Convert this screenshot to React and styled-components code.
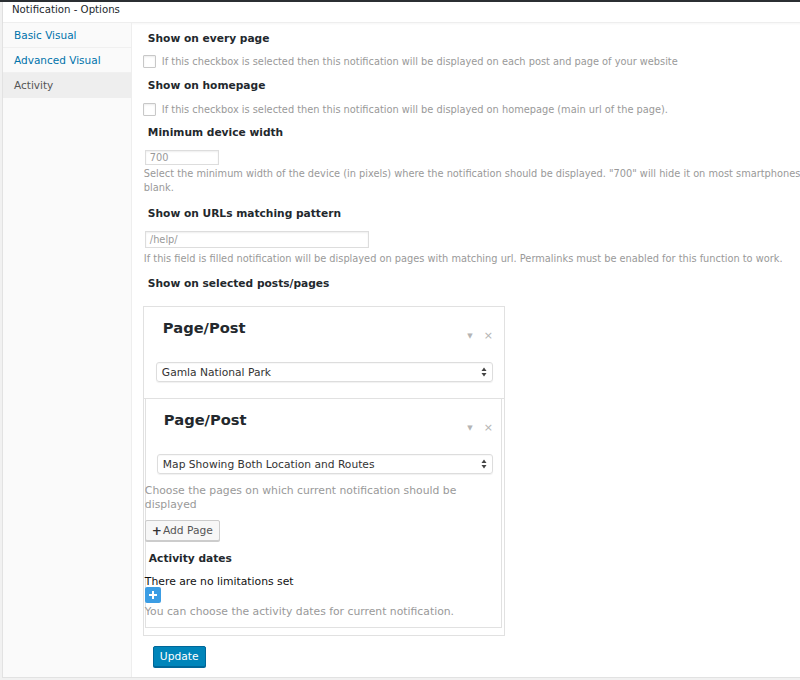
import React from "react";
import styled, { createGlobalStyle } from "styled-components";

const Global = createGlobalStyle`
  html, body { margin: 0; padding: 0; }
  body {
    background: #f1f1f1;
    font-family: "DejaVu Sans", Verdana, sans-serif;
    overflow: hidden;
    width: 800px;
    height: 680px;
  }
`;

const TopLine = styled.div`
  height: 2px;
  background: #2b2f33;
`;

const Postbox = styled.div`
  margin-left: 2px;
  width: 900px;
  height: 675px;
  background: #fff;
  border-left: 1px solid #e2e2e2;
  border-bottom: 1px solid #e2e2e2;
  display: flex;
  flex-direction: column;
`;

const BoxHeader = styled.div`
  height: 20px;
  line-height: 15px;
  padding-left: 9px;
  font-size: 10.2px;
  color: #23282d;
  border-bottom: 1px solid #eee;
  box-shadow: 0 1px 2px rgba(0, 0, 0, 0.04);
`;

const Body = styled.div`
  flex: 1;
  display: flex;
`;

const Sidebar = styled.ul`
  list-style: none;
  margin: 0;
  padding: 0;
  width: 128px;
  background: #fafafa;
  border-right: 1px solid #eee;
`;

const NavItem = styled.li`
  height: 24px;
  line-height: 25px;
  padding-left: 11px;
  font-size: 10.5px;
  color: ${(p) => (p.$active ? "#555" : "#0073aa")};
  background: ${(p) => (p.$active ? "#eee" : "transparent")};
  border-bottom: 1px solid ${(p) => (p.$active ? "#eee" : "#f0f0f0")};
`;

const Content = styled.div`
  width: 760px;
  padding: 9px 0 0 12px;
`;

const Field = styled.div`
  margin-bottom: ${(p) => p.$mb ?? 11}px;
`;

const Heading = styled.h4`
  margin: 0 0 ${(p) => p.$mb ?? 9}px 4px;
  font-size: 10.65px;
  line-height: 14px;
  font-weight: bold;
  color: #23282d;
`;

const CheckRow = styled.label`
  display: flex;
  align-items: center;
  gap: 6px;
  height: 14px;
  font-size: 9.8px;
  color: #999;
`;

const Box = styled.span`
  width: 11px;
  height: 11px;
  margin-left: -1px;
  border: 1px solid #c8c8c8;
  border-radius: 1px;
  background: #fff;
  box-shadow: inset 0 1px 2px rgba(0, 0, 0, 0.08);
  flex: none;
`;

const TextInput = styled.div`
  width: ${(p) => p.$w}px;
  height: ${(p) => p.$h}px;
  margin-left: 1px;
  border: 1px solid #ddd;
  box-shadow: inset 0 1px 2px rgba(0, 0, 0, 0.07);
  font-size: 9.8px;
  line-height: ${(p) => p.$h}px;
  padding-left: 4px;
  box-sizing: content-box;
  color: #999;
`;

const Desc = styled.p`
  margin: ${(p) => p.$mt ?? 2}px 0 0 0;
  font-size: 9.8px;
  line-height: 14px;
  color: #999;
`;

const Outer = styled.div`
  width: 360px;
  margin-left: -1px;
  border: 1px solid #e1e1e1;
  padding-bottom: 7px;
`;

const Panel = styled.div`
  padding: ${(p) => p.$pad};
  border-bottom: ${(p) => (p.$noBorder ? "none" : "1px solid #e1e1e1")};
`;

const PanelHead = styled.div`
  display: flex;
  align-items: flex-end;
  height: 41px;
  padding-left: 7px;
  margin-bottom: 14px;
`;

const PanelTitle = styled.h3`
  flex: 1;
  margin: 0;
  align-self: flex-start;
  padding-top: 12px;
  font-size: 14.7px;
  line-height: 18px;
  font-weight: bold;
  color: #23282d;
`;

const Tool = styled.span`
  font-size: ${(p) => p.$s}px;
  color: #b4b4b4;
  margin-left: ${(p) => p.$ml}px;
  line-height: 12px;
  padding-bottom: 6px;
`;

const Select = styled.div`
  height: 18px;
  border: 1px solid #ddd;
  border-radius: 3px;
  box-shadow: 0 1px 1px rgba(0, 0, 0, 0.06), inset 0 1px 1px rgba(0, 0, 0, 0.03);
  display: flex;
  align-items: center;
  padding: 0 5px;
  font-size: 10.7px;
  color: #333;
`;

const SelectText = styled.span`
  flex: 1;
`;

const Inner = styled.div`
  margin: 0 2px 0 1px;
  border: 1px solid #e1e1e1;
  border-top: none;
  padding-bottom: 8px;
`;

const Wrap = styled.div`
  margin-left: -1px;
  padding-right: 4px;
`;

const Hint = styled.p`
  margin: 0;
  font-size: 10.8px;
  line-height: 14px;
  color: ${(p) => (p.$dark ? "#111" : "#999")};
`;

const AddButton = styled.div`
  display: inline-flex;
  align-items: center;
  margin-top: 8px;
  height: 19px;
  padding: 0 6px;
  border: 1px solid #ccc;
  border-radius: 2px;
  background: #f7f7f7;
  box-shadow: 0 1px 0 #ccc;
  font-size: 10.7px;
  color: #555;
`;

const Plus = styled.b`
  font-size: 12px;
  color: #333;
  margin-right: 1px;
`;

const SubHeading = styled.h4`
  margin: 11px 0 9px 4px;
  font-size: 10.65px;
  line-height: 14px;
  font-weight: bold;
  color: #23282d;
`;

const BlueAdd = styled.div`
  width: 16px;
  height: 16px;
  margin: -2px 0 2px;
  border-radius: 2px;
  background: #3b9de4;
  display: flex;
  align-items: center;
  justify-content: center;
`;

const UpdateButton = styled.div`
  display: inline-block;
  margin-left: 9px;
  height: 19px;
  line-height: 19px;
  padding: 0 6px;
  border: 1px solid #006799;
  border-radius: 2px;
  background: #0085ba;
  box-shadow: 0 1px 0 #006799;
  color: #fff;
  font-size: 10.7px;
`;

const Arrows = () => (
  <svg width="6" height="10" viewBox="0 0 6 10">
    <path d="M3 0.5 L5.5 4 H0.5 Z" fill="#444" />
    <path d="M3 9.5 L5.5 6 H0.5 Z" fill="#444" />
  </svg>
);

const PagePost = ({ value, noBorder, pad }) => (
  <Panel $noBorder={noBorder} $pad={pad}>
    <PanelHead>
      <PanelTitle>Page/Post</PanelTitle>
      <Tool $s={7} $ml={0}>▼</Tool>
      <Tool $s={11} $ml={11}>×</Tool>
    </PanelHead>
    <Select>
      <SelectText>{value}</SelectText>
      <Arrows />
    </Select>
  </Panel>
);

export default function App() {
  return (
    <>
      <Global />
      <TopLine />
      <Postbox>
        <BoxHeader>Notification - Options</BoxHeader>
        <Body>
          <Sidebar>
            <NavItem>Basic Visual</NavItem>
            <NavItem>Advanced Visual</NavItem>
            <NavItem $active>Activity</NavItem>
          </Sidebar>
          <Content>
            <Field>
              <Heading $mb={8}>Show on every page</Heading>
              <CheckRow>
                <Box />
                If this checkbox is selected then this notification will be displayed on each post and page of your website
              </CheckRow>
            </Field>
            <Field $mb={10}>
              <Heading>Show on homepage</Heading>
              <CheckRow>
                <Box />
                If this checkbox is selected then this notification will be displayed on homepage (main url of the page).
              </CheckRow>
            </Field>
            <Field $mb={12}>
              <Heading $mb={10}>Minimum device width</Heading>
              <TextInput $w={68} $h={13}>700</TextInput>
              <Desc>
                Select the minimum width of the device (in pixels) where the notification should be displayed. "700" will hide it on most smartphones. Leave it
                <br />
                blank.
              </Desc>
            </Field>
            <Field>
              <Heading $mb={10}>Show on URLs matching pattern</Heading>
              <TextInput $w={218} $h={15}>/help/</TextInput>
              <Desc $mt={4}>
                If this field is filled notification will be displayed on pages with matching url. Permalinks must be enabled for this function to work.
              </Desc>
            </Field>
            <Field $mb={9}>
              <Heading $mb={15}>Show on selected posts/pages</Heading>
              <Outer>
                <PagePost value="Gamla National Park" pad="0 11px 16px 12px" />
                <Inner>
                  <PagePost value="Map Showing Both Location and Routes" pad="0 8px 10px 11px" noBorder />
                  <Wrap>
                    <Hint>Choose the pages on which current notification should be displayed</Hint>
                    <AddButton>
                      <Plus>+</Plus>Add Page
                    </AddButton>
                    <SubHeading>Activity dates</SubHeading>
                    <Hint $dark>There are no limitations set</Hint>
                    <BlueAdd>
                      <svg width="10" height="10" viewBox="0 0 10 10">
                        <path d="M5 1 V9 M1 5 H9" stroke="#fff" strokeWidth="2" />
                      </svg>
                    </BlueAdd>
                    <Hint>You can choose the activity dates for current notification.</Hint>
                  </Wrap>
                </Inner>
              </Outer>
            </Field>
            <UpdateButton>Update</UpdateButton>
          </Content>
        </Body>
      </Postbox>
    </>
  );
}
